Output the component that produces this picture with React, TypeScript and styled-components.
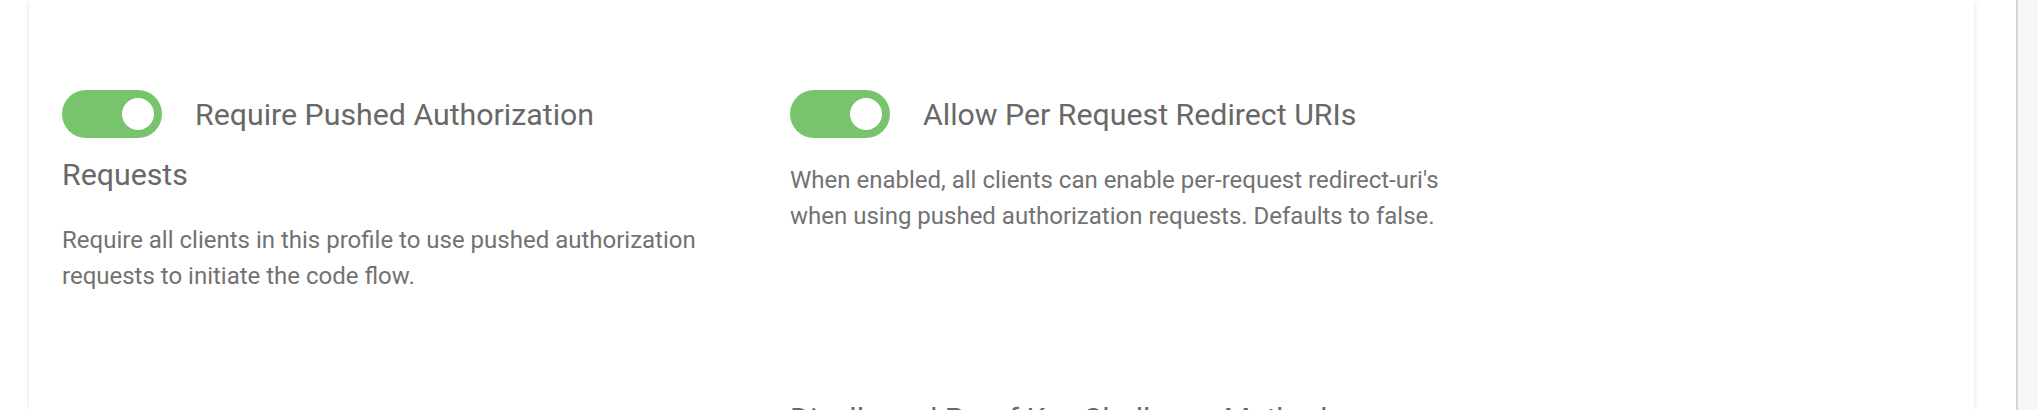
import React from "react";
import styled, { createGlobalStyle } from "styled-components";

const GlobalStyle = createGlobalStyle`
  body {
    margin: 0;
    background: #ffffff;
    font-family: Roboto, "Noto Sans", "Liberation Sans", sans-serif;
  }
`;

const Page = styled.div`
  display: flex;
  height: 100vh;
  overflow: hidden;
`;

const Main = styled.main`
  flex: 1;
  padding: 0 42px 0 29px;
`;

const Panel = styled.section`
  height: 100%;
  box-sizing: border-box;
  background: #ffffff;
  padding: 85px 33px 0;
  box-shadow: -3px 0 4px -2px rgba(0, 0, 0, 0.09),
    3px 0 4px -2px rgba(0, 0, 0, 0.09);
`;

const Grid = styled.div`
  display: grid;
  grid-template-columns: 660px 660px;
  column-gap: 68px;
  row-gap: 95px;
`;

const Field = styled.div``;

const FieldTitle = styled.h3`
  margin: 0;
  font-size: 30.3px;
  font-weight: 400;
  line-height: 60px;
  color: #686868;
`;

const Switch = styled.span<{ $on: boolean }>`
  display: inline-flex;
  align-items: center;
  justify-content: ${(p) => (p.$on ? "flex-end" : "flex-start")};
  box-sizing: border-box;
  width: 100px;
  height: 48px;
  padding: 0 8px;
  margin: 0 33px 6px 0;
  border-radius: 24px;
  vertical-align: middle;
  background: ${(p) => (p.$on ? "#77c46c" : "#cccccc")};
  cursor: pointer;
`;

const Knob = styled.span`
  width: 32px;
  height: 32px;
  border-radius: 50%;
  background: #ffffff;
`;

const Description = styled.p`
  margin: 17px 0 0;
  font-size: 24px;
  line-height: 36px;
  color: #727272;
`;

const SideRail = styled.aside`
  width: 20px;
  border-left: 2px solid #cbd6da;
  background: #f6f6f6;
`;

type Toggle = { title: string; description: string; on: boolean };

const toggles: Toggle[] = [
  {
    title: "Require Pushed Authorization Requests",
    description:
      "Require all clients in this profile to use pushed authorization requests to initiate the code flow.",
    on: true,
  },
  {
    title: "Allow Per Request Redirect URIs",
    description:
      "When enabled, all clients can enable per-request redirect-uri's when using pushed authorization requests. Defaults to false.",
    on: true,
  },
];

const App = () => {
  return (
    <Page>
      <GlobalStyle />
      <Main>
        <Panel>
          <Grid>
            {toggles.map((t) => (
              <Field key={t.title}>
                <FieldTitle>
                  <Switch $on={t.on} role="switch" aria-checked={t.on}>
                    <Knob />
                  </Switch>
                  {t.title}
                </FieldTitle>
                <Description>{t.description}</Description>
              </Field>
            ))}
            <Field />
            <Field>
              <FieldTitle>Disallowed Proof Key Challenge Methods</FieldTitle>
            </Field>
          </Grid>
        </Panel>
      </Main>
      <SideRail />
    </Page>
  );
};

export default App;
